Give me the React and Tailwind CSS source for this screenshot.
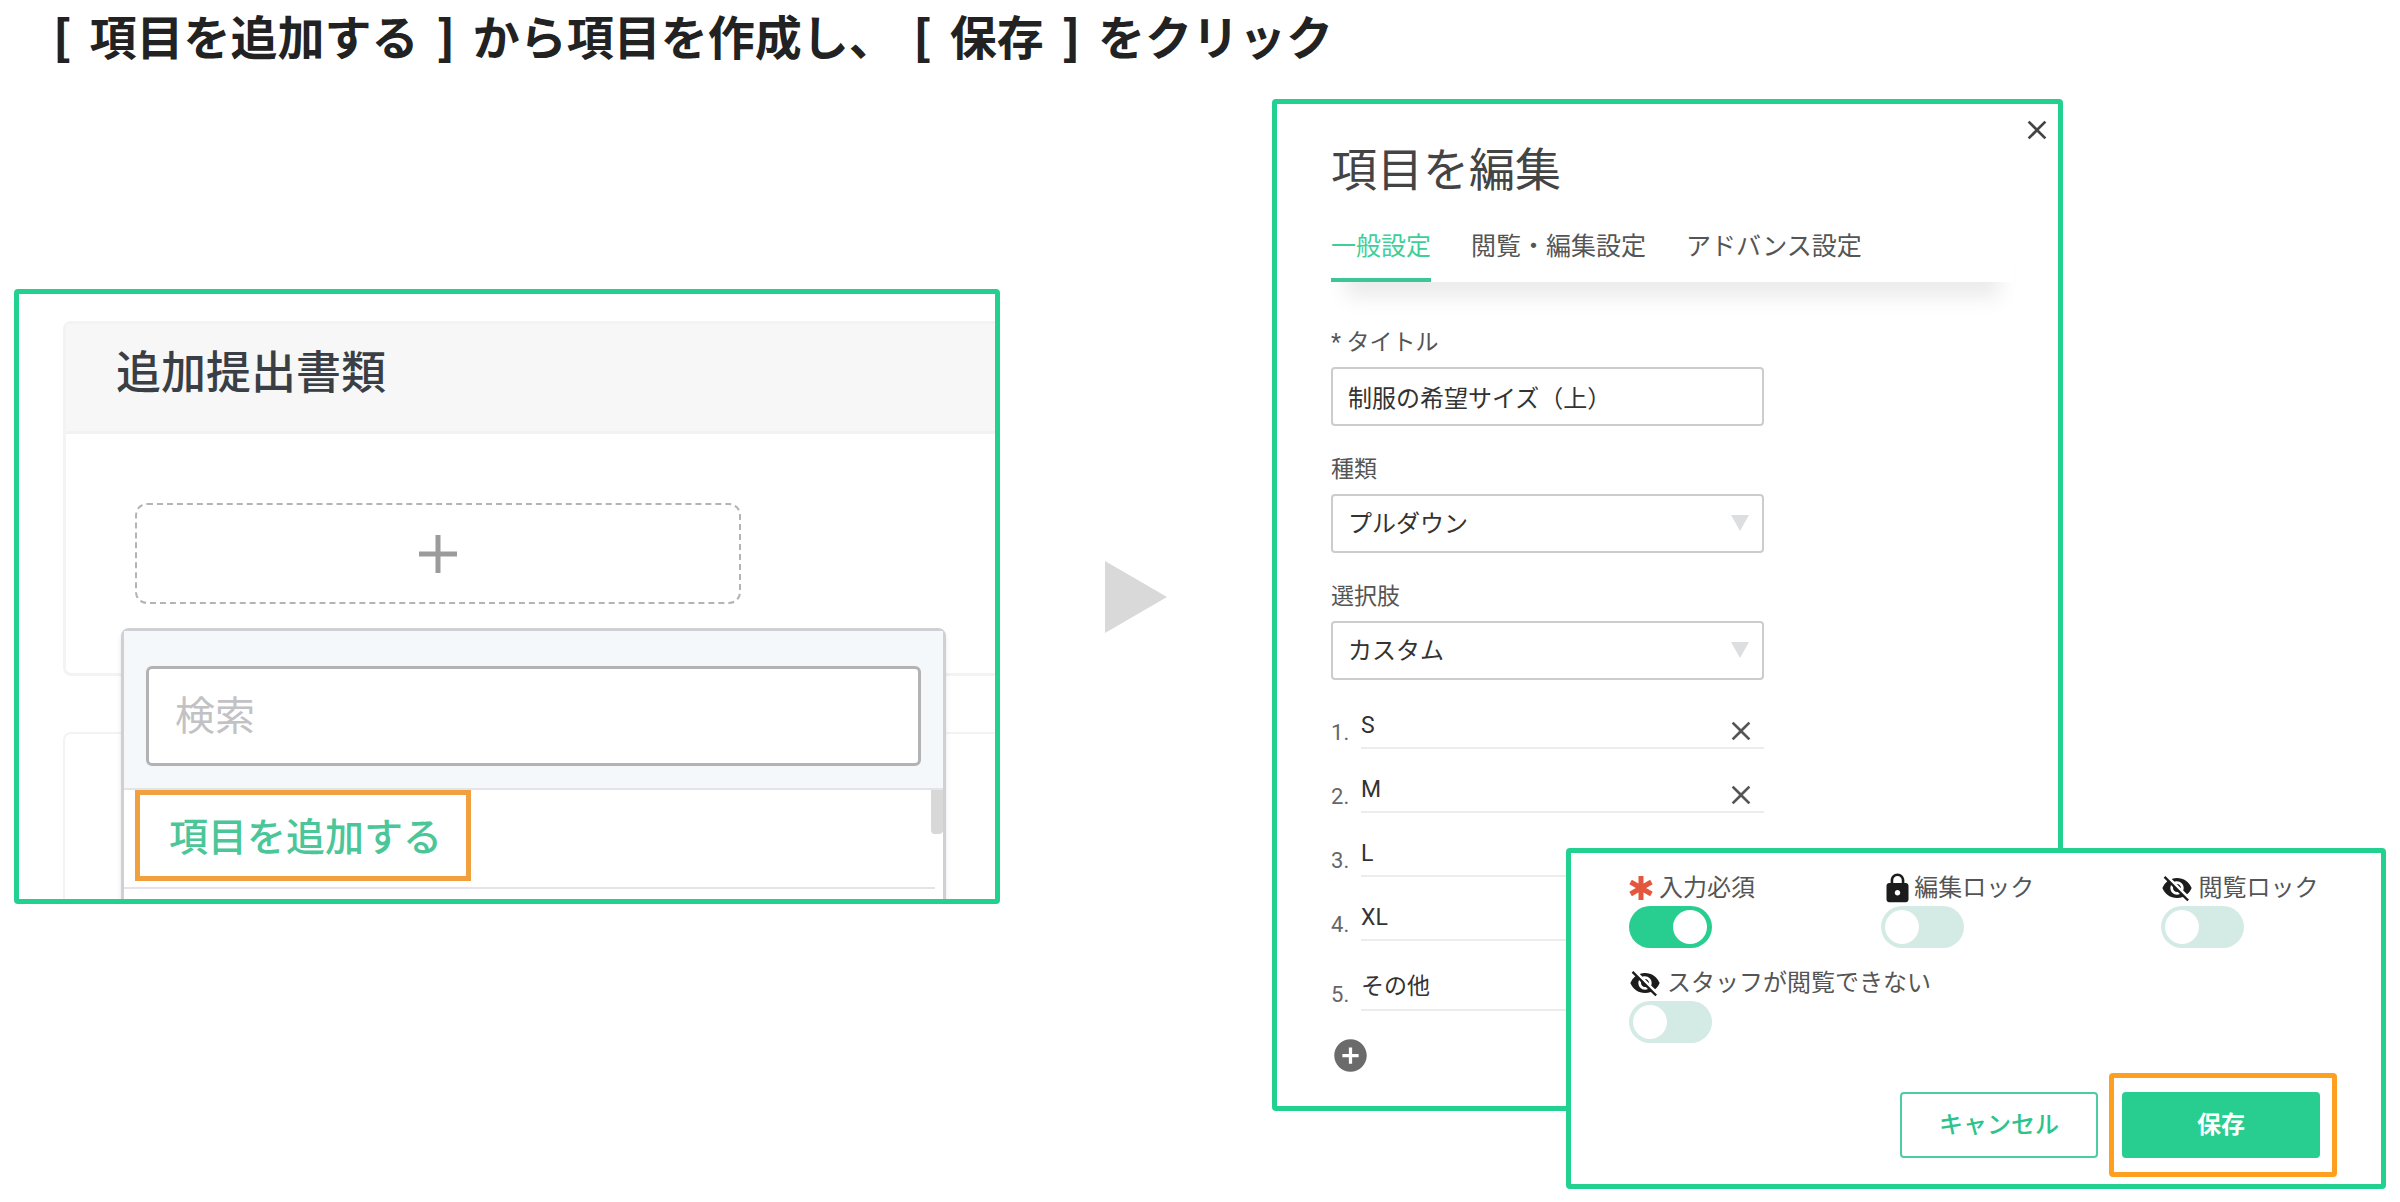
import { MdAddCircle, MdClose, MdLock, MdVisibilityOff } from 'react-icons/md';

const TABS = ['一般設定', '閲覧・編集設定', 'アドバンス設定'];
const CHOICES = ['S', 'M', 'L', 'XL', 'その他'];

function Panel({ className = '', children }) {
  return (
    <section className={`rounded-sm border-[5px] border-[#22d08f] bg-white ${className}`}>
      {children}
    </section>
  );
}

function Bracket({ children }) {
  return <span className="px-[7px] font-black">{children}</span>;
}

function AddItemPanel() {
  return (
    <Panel className="mt-[190px] overflow-hidden pt-[27px] pl-11">
      <div className="rounded-l-lg border-[3px] border-r-0 border-[#f3f3f3]">
        <h2 className="border-b-[3px] border-[#f2f2f2] bg-[#f7f7f7] pt-[18px] pb-[25px] pl-[50px] text-[45px] leading-[64px] font-medium text-[#3a3f45]">
          追加提出書類
        </h2>
        <div className="pt-[69px] pr-[254px] pb-[69px] pl-[69px]">
          <div className="relative">
            <button
              type="button"
              aria-label="追加"
              className="flex h-[101px] w-full items-center justify-center rounded-xl border-2 border-dashed border-[#b4b4b4]"
            >
              <svg viewBox="0 0 38 38" className="size-[38px]" stroke="#9b9b9b" strokeWidth="5">
                <path d="M19 0V38M0 19H38" />
              </svg>
            </button>
            <ItemMenu />
          </div>
        </div>
      </div>
      <div className="mt-14 h-[167px] rounded-tl-lg border-2 border-r-0 border-b-0 border-[#f3f3f3]" />
    </Panel>
  );
}

function ItemMenu() {
  return (
    <div className="absolute top-[125px] -right-[205px] -left-3.5 z-10 rounded-t-lg border-[3px] border-[#cfd0d3] bg-white shadow-md">
      <div className="border-b-2 border-[#e2e4ea] bg-[#f5f8fb] px-[22px] pt-[35px] pb-[22px]">
        <input
          type="search"
          aria-label="検索"
          placeholder="検索"
          className="block h-[100px] w-full rounded-md border-[3px] border-[#b3b3b3] bg-white px-[26px] text-[40px] placeholder:text-[#c2c2c5]"
        />
      </div>
      <div className="flex items-start justify-between">
        <button
          type="button"
          className="ml-[11px] border-[5px] border-[#f0a03f] pt-[15px] pr-6 pb-[9px] pl-[29px] text-[39px] leading-[57px] font-medium text-[#4bc698]"
        >
          項目を追加する
        </button>
        <span className="h-11 w-3 rounded-b-sm bg-[#d8d8d8]" />
      </div>
      <div className="mt-1.5 mr-2 h-10 border-t-2 border-[#e4e4e8]" />
    </div>
  );
}

function Field({ id, label, children }) {
  return (
    <div className="w-[433px]">
      <label htmlFor={id} className="block h-[42px] text-[23px] leading-9 text-[#555]">
        {label}
      </label>
      {children}
    </div>
  );
}

function SelectField({ id, label, value }) {
  return (
    <Field id={id} label={label}>
      <div className="relative">
        <select
          id={id}
          className="block h-[59px] w-full appearance-none rounded-sm border-2 border-[#ccc] bg-white px-[15px] text-2xl text-[#333]"
        >
          <option>{value}</option>
        </select>
        <svg viewBox="0 0 18 16" className="pointer-events-none absolute top-[21px] right-[15px] h-4 w-[18px] fill-[#dcdedf]">
          <path d="M0 0H18L9 16Z" />
        </svg>
      </div>
    </Field>
  );
}

function Choice({ index, value }) {
  return (
    <li className="flex w-[433px] items-end">
      <label htmlFor={`choice-${index}`} className="w-[30px] text-[22px] leading-8 text-[#666]">
        {index}.
      </label>
      <div className="flex flex-1 items-end border-b-2 border-[#ececec] pr-[7px]">
        <input
          id={`choice-${index}`}
          defaultValue={value}
          className={`min-w-0 flex-1 bg-transparent pt-1.5 text-[23px] text-[#333] ${index === 5 ? 'h-14' : 'h-[50px]'}`}
        />
        <button type="button" aria-label="削除" className="text-[#555]">
          <MdClose size={32} />
        </button>
      </div>
    </li>
  );
}

function EditPanel() {
  return (
    <Panel className="relative w-[71%] pt-6 pb-[31px] pl-[54px]">
      <button type="button" aria-label="閉じる" className="absolute top-2.5 right-[5px] text-[#444]">
        <MdClose size={32} />
      </button>
      <h2 className="pb-[3px] text-[46px] leading-[84px] text-[#444]">項目を編集</h2>
      <div role="tablist" className="mr-11 flex gap-10 shadow-[0_30px_20px_-14px_rgba(0,0,0,0.08)]">
        {TABS.map((tab, i) => (
          <button
            key={tab}
            type="button"
            role="tab"
            aria-selected={i === 0}
            className={`border-b-4 py-[13px] text-[25px] leading-[37px] ${
              i === 0 ? 'border-[#3cc598] text-[#3ccf9a]' : 'border-transparent text-[#555]'
            }`}
          >
            {tab}
          </button>
        ))}
      </div>

      <form className="mt-[43px] flex flex-col gap-[26px]">
        <Field id="title" label="* タイトル">
          <input
            id="title"
            defaultValue="制服の希望サイズ（上）"
            className="block h-[59px] w-full rounded-sm border-2 border-[#ccc] px-[15px] text-2xl text-[#333]"
          />
        </Field>
        <SelectField id="kind" label="種類" value="プルダウン" />
        <SelectField id="options" label="選択肢" value="カスタム" />
      </form>

      <ol className="mt-[17px] flex flex-col gap-3">
        {CHOICES.map((value, i) => (
          <Choice key={value} index={i + 1} value={value} />
        ))}
      </ol>
      <button type="button" aria-label="選択肢を追加" className="mt-[25px] block text-[#6b6b6b]">
        <MdAddCircle size={39} />
      </button>
    </Panel>
  );
}

function Toggle({ id, icon, label, checked = false }) {
  return (
    <div>
      <label htmlFor={id} className="flex h-9 items-center text-2xl leading-9 text-[#555]">
        {icon}
        {label}
      </label>
      <input
        id={id}
        type="checkbox"
        role="switch"
        defaultChecked={checked}
        className="block h-[42px] w-[83px] appearance-none rounded-full bg-[#d3eae5] p-1 before:block before:size-[34px] before:rounded-full before:bg-white checked:bg-[#28cd90] checked:pl-11"
      />
    </div>
  );
}

function OptionsPanel() {
  return (
    <Panel className="relative -mt-[263px] ml-auto w-[73.6%] pt-[17px] pr-11 pb-[7px] pl-[58px]">
      <div className="grid grid-cols-[253fr_280fr_177fr] gap-y-[17px]">
        <Toggle
          id="required"
          label="入力必須"
          checked
          icon={
            <svg viewBox="0 0 24 24" className="mr-1.5 size-6" stroke="#e2573d" strokeWidth="5">
              <path d="M12 0V24M1.6 6L22.4 18M22.4 6L1.6 18" />
            </svg>
          }
        />
        <Toggle id="edit-lock" label="編集ロック" icon={<MdLock size={33} className="text-[#1c1c1c]" />} />
        <Toggle
          id="view-lock"
          label="閲覧ロック"
          icon={<MdVisibilityOff size={32} className="mr-1.5 text-[#1c1c1c]" />}
        />
        <div className="col-span-3">
          <Toggle
            id="staff-hidden"
            label="スタッフが閲覧できない"
            icon={<MdVisibilityOff size={32} className="mr-1.5 text-[#1c1c1c]" />}
          />
        </div>
      </div>
      <div className="mt-[30px] flex items-center justify-end gap-[11px]">
        <button
          type="button"
          className="h-[66px] w-[198px] rounded-sm border-2 border-[#4ccda0] text-2xl font-medium text-[#2cc48c]"
        >
          キャンセル
        </button>
        <div className="rounded-sm border-[5px] border-[#ff9f20] py-3.5 pr-3 pl-2">
          <button type="button" className="block h-[66px] w-[198px] rounded-sm bg-[#28cd90] text-2xl font-bold text-white">
            保存
          </button>
        </div>
      </div>
    </Panel>
  );
}

export default function App() {
  return (
    <main lang="ja" className="bg-white px-3.5 pb-3.5 font-[Roboto,'Noto_Sans_CJK_JP',sans-serif]">
      <h1 className="pl-8 font-['Noto_Sans_CJK_JP',sans-serif] text-[47px] leading-[70px] font-bold text-[#222]">
        <Bracket>[</Bracket> 項目を追加する <Bracket>]</Bracket> から項目を作成し、 <Bracket>[</Bracket> 保存{' '}
        <Bracket>]</Bracket> をクリック
      </h1>
      <div className="mt-[29px] grid grid-cols-[986fr_272fr_1114fr] items-start">
        <AddItemPanel />
        <svg viewBox="0 0 62 72" className="mt-[462px] h-[72px] w-[62px] justify-self-center fill-[#d9d9d9]">
          <path d="M0 0L62 36L0 72Z" />
        </svg>
        <div>
          <EditPanel />
          <OptionsPanel />
        </div>
      </div>
    </main>
  );
}
